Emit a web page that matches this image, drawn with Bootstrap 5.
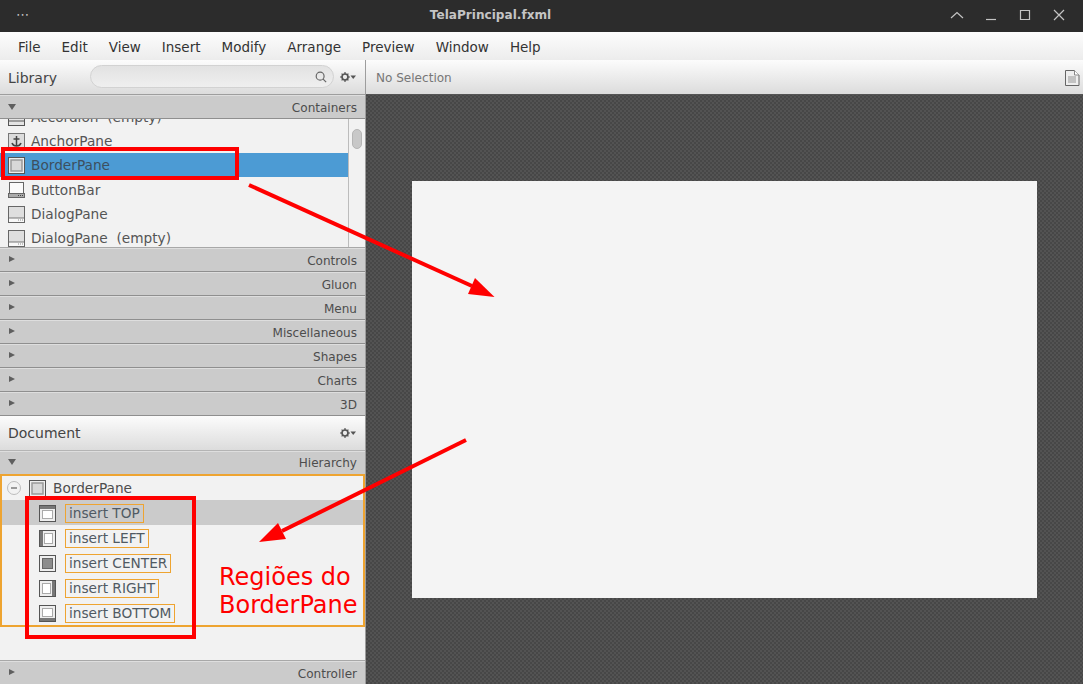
<!DOCTYPE html>
<html lang="en">
<head>
<meta charset="UTF-8">
<title>TelaPrincipal.fxml</title>
<link href="https://cdn.jsdelivr.net/npm/bootstrap@5.3.0/dist/css/bootstrap.min.css" rel="stylesheet">
<style>
html, body { height: 100%; overflow: hidden; }
body { font-family: "DejaVu Sans", sans-serif; font-size: 13.7px; color: #4d4d4d; background: #f2f2f2; position: relative; }
.title-bar { height: 32px; background: #2c2c2c; color: #c4c4c4; position: relative; padding-right: 102px; padding-bottom: 2px; }
.title-text { font-weight: 700; font-size: 12.1px; }
.dots { left: 16px; top: 7px; font-size: 13px; letter-spacing: 1px; line-height: 16px; }
.win-btns { right: 0; top: 0; height: 32px; }
.win-btns svg { display: block; position: absolute; top: 8px; }
.win-up { right: 118px; }
.win-min { right: 83px; }
.win-max { right: 50px; }
.win-close { right: 15px; }
.menu-bar { height: 28px; background: linear-gradient(#fdfdfd, #ececec); padding-left: 18px; padding-top: 2px; gap: 21px; color: #333; font-size: 13.5px; }
.main-area { height: 624px; }
.left-pane { width: 366px; border-right: 1px solid #9d9d9d; background: #f2f2f2; }
.pane-head { background: linear-gradient(#fcfcfc, #dcdcdc); border-bottom: 1px solid #9e9e9e; padding: 0 8px; font-size: 14px; color: #444; }
.lib-head { height: 35px; padding-top: 2px; }
.lib-head > svg { margin-top: -2px; }
.doc-head { height: 35px; border-bottom-color: #b4b4b4; }
.search-box { width: 244px; height: 23px; margin-left: 33px; margin-top: -3px; padding-right: 6px; border: 1px solid #d2d2d2; border-radius: 12px; background: linear-gradient(#e2e2e2, #efefef); }
.acc-bar { height: 24px; background: #cbcbcb; border-bottom: 1px solid #8f8f8f; border-top: 1px solid #dedede; padding: 2px 8px 0; font-size: 12.05px; color: #4d4d4d; }
.acc-bar.hier-bar { padding-top: 0; }
.tri-r { width: 0; height: 0; border-left: 6px solid #5f5f5f; border-top: 3.5px solid transparent; border-bottom: 3.5px solid transparent; margin-top: -4px; margin-left: 1px; }
.tri-d { width: 0; height: 0; border-top: 6px solid #5f5f5f; border-left: 4px solid transparent; border-right: 4px solid transparent; margin-top: -3px; }
.lib-list { height: 129px; overflow: hidden; background: #f2f2f2; border-bottom: 1px solid #a8a8a8; }
.lib-inner { margin-top: -15px; margin-right: 16px; }
.lib-scroll { right: 0; top: 0; bottom: 0; width: 17px; border-left: 1px solid #bcbcbc; background: #f2f2f2; }
.lib-thumb { position: absolute; left: 3px; top: 10px; width: 10px; height: 20px; background: #c8c8c8; border: 1px solid #b5b5b5; border-radius: 5px; }
.lib-row { height: 24.3px; padding-left: 8px; padding-top: 2px; gap: 6px; white-space: pre; color: #555; }
.lib-row.selected { background: #4c9bd4; color: #3d4f5e; }
.tree-box { height: 153px; margin-top: -1px; border: 2px solid #eea431; background: #f2f2f2; position: relative; }
.tree-top { height: 24px; padding-left: 5px; }
.tree-label { margin-left: 7px; }
.tree-row { height: 25px; padding-left: 37px; padding-top: 2px; }
.tree-row.active { background: #cbcbcb; }
.minus-circle { width: 14px; height: 14px; border-radius: 50%; border: 1px solid #bdbdbd; margin-right: 8px; position: relative; }
.minus-circle::after { content: ""; position: absolute; left: 3px; top: 5px; width: 6px; height: 2px; background: #9a9a9a; }
.slot-tag { border: 1px solid #eea431; margin-left: 9px; height: 19px; line-height: 17px; padding: 0 3px; color: #505a63; }
.tree-gap { height: 34px; border-bottom: 1px solid #a8a8a8; }
.canvas-pane { background-color: #4b4b4b; background-image: repeating-conic-gradient(#474747 0 25%, #535353 0 50%); background-size: 4px 4px; }
.canvas-head { height: 35px; background: linear-gradient(#fcfcfc, #dcdcdc); border-bottom: 1px solid #555; padding: 3px 3px 0 10px; color: #777; font-size: 12.05px; }
.canvas-head svg { margin-top: -2px; }
.art-board { width: 625px; height: 417px; background: #f4f4f4; }
.note-svg { left: 0; top: 0; pointer-events: none; }
.note-text { left: 219px; top: 563px; color: #f00; font-size: 24px; line-height: 28px; }
</style>
</head>
<body>

<svg width="0" height="0" class="position-absolute">
  <symbol id="gear-menu" viewBox="0 0 18 12"><circle cx="6" cy="6" r="3" fill="none" stroke="#555" stroke-width="1.7"/><path d="M6 1V3M6 9V11M1 6H3M9 6H11M2.600 2.600L4 4M8 8L9.400 9.400M9.400 2.600L8 4M4 8L2.600 9.400" stroke="#555" stroke-width="1.2"/><path d="M11.500 4.500H17L14.200 8Z" fill="#555"/></symbol>
  <symbol id="dialog-icon" viewBox="0 0 17 17"><rect x="0.500" y="0.500" width="16" height="16" fill="#dedede" stroke="#666"/><rect x="1" y="12" width="15" height="4" fill="#f8f8f8"/><path d="M1 12H16" stroke="#777"/><path d="M10 14H11M12 14H13M14 14H15" stroke="#888"/></symbol>
  <symbol id="border-icon" viewBox="0 0 17 17"><rect x="0.500" y="0.500" width="16" height="16" fill="#eee" stroke="#555"/><rect x="3" y="3" width="11" height="11" fill="#d8d8d8" stroke="#999" stroke-width="1.500"/></symbol>
</svg>

<div class="title-bar d-flex align-items-center justify-content-center">
  <span class="title-text">TelaPrincipal.fxml</span>
  <span class="dots position-absolute">&#8943;</span>
  <div class="win-btns position-absolute">
    <svg class="win-up" width="16" height="16" fill="none" stroke="#c4c4c4" stroke-width="1.2"><path d="M2 10L8 4.500L14 10"/></svg>
    <svg class="win-min" width="16" height="16" fill="none" stroke="#c4c4c4" stroke-width="1.2"><path d="M2 11.500H12"/></svg>
    <svg class="win-max" width="16" height="16" fill="none" stroke="#c4c4c4" stroke-width="1.2"><path d="M3.500 2.500H12.500V11.500H3.500Z"/></svg>
    <svg class="win-close" width="16" height="16" fill="none" stroke="#c4c4c4" stroke-width="1.2"><path d="M2 2L12 12M12 2L2 12"/></svg>
  </div>
</div>

<div class="menu-bar d-flex align-items-center">
  <span>File</span><span>Edit</span><span>View</span><span>Insert</span><span>Modify</span><span>Arrange</span><span>Preview</span><span>Window</span><span>Help</span>
</div>

<div class="main-area d-flex">
  <div class="left-pane flex-shrink-0">
    <div class="pane-head lib-head d-flex align-items-center">
      <span>Library</span>
      <div class="search-box d-flex align-items-center justify-content-end">
        <svg width="12" height="12" viewBox="0 0 14 14" fill="none" stroke="#666" stroke-width="1.4"><circle cx="6" cy="6" r="4.600"/><path d="M9.500 9.500L13 13"/></svg>
      </div>
      <svg class="ms-auto" width="18" height="12"><use href="#gear-menu"/></svg>
    </div>
    <div class="acc-bar d-flex align-items-center justify-content-between"><span class="tri-d"></span><span>Containers</span></div>
    <div class="lib-list position-relative">
      <div class="lib-inner">
        <div class="lib-row d-flex align-items-center"><svg width="17" height="17" stroke="#555"><rect x="0.500" y="0.500" width="16" height="16" fill="#e4e4e4"/><path d="M1 12H16"/></svg><span>Accordion  (empty)</span></div>
        <div class="lib-row d-flex align-items-center"><svg width="17" height="17" stroke="#444"><rect x="0.500" y="0.500" width="16" height="16" fill="#dcdcdc" stroke="#777"/><path d="M8.500 3V13M5.500 6H11.500M4 10Q5 13 8.500 13Q12 13 13 10" fill="none" stroke-width="1.500"/></svg><span>AnchorPane</span></div>
        <div class="lib-row selected d-flex align-items-center"><svg width="17" height="17"><use href="#border-icon"/></svg><span>BorderPane</span></div>
        <div class="lib-row d-flex align-items-center"><svg width="17" height="17"><rect x="1.500" y="0.500" width="14" height="12" fill="#fafafa" stroke="#666"/><rect x="0.500" y="11.500" width="16" height="4" fill="#aaa" stroke="#666"/><path d="M10 13.500H11M12 13.500H13M14 13.500H15" stroke="#444"/></svg><span>ButtonBar</span></div>
        <div class="lib-row d-flex align-items-center"><svg width="17" height="17"><use href="#dialog-icon"/></svg><span>DialogPane</span></div>
        <div class="lib-row d-flex align-items-center"><svg width="17" height="17"><use href="#dialog-icon"/></svg><span>DialogPane  (empty)</span></div>
      </div>
      <div class="lib-scroll position-absolute"><div class="lib-thumb"></div></div>
    </div>
    <div class="acc-bar d-flex align-items-center justify-content-between"><span class="tri-r"></span><span>Controls</span></div>
    <div class="acc-bar d-flex align-items-center justify-content-between"><span class="tri-r"></span><span>Gluon</span></div>
    <div class="acc-bar d-flex align-items-center justify-content-between"><span class="tri-r"></span><span>Menu</span></div>
    <div class="acc-bar d-flex align-items-center justify-content-between"><span class="tri-r"></span><span>Miscellaneous</span></div>
    <div class="acc-bar d-flex align-items-center justify-content-between"><span class="tri-r"></span><span>Shapes</span></div>
    <div class="acc-bar d-flex align-items-center justify-content-between"><span class="tri-r"></span><span>Charts</span></div>
    <div class="acc-bar d-flex align-items-center justify-content-between"><span class="tri-r"></span><span>3D</span></div>
    <div class="pane-head doc-head d-flex align-items-center justify-content-between">
      <span>Document</span>
      <svg width="18" height="12"><use href="#gear-menu"/></svg>
    </div>
    <div class="acc-bar hier-bar d-flex align-items-center justify-content-between"><span class="tri-d"></span><span>Hierarchy</span></div>
    <div class="tree-box">
      <div class="tree-top d-flex align-items-center">
        <span class="minus-circle"></span>
        <svg width="17" height="17"><use href="#border-icon"/></svg>
        <span class="tree-label">BorderPane</span>
      </div>
      <div class="tree-row active d-flex align-items-center"><svg width="17" height="17"><rect x="0.500" y="0.500" width="16" height="16" fill="#eee" stroke="#555"/><rect x="1" y="1" width="15" height="3" fill="#777"/><rect x="3.500" y="5.500" width="10" height="8" fill="#fff" stroke="#aaa"/></svg><span class="slot-tag">insert TOP</span></div>
      <div class="tree-row d-flex align-items-center"><svg width="17" height="17"><rect x="0.500" y="0.500" width="16" height="16" fill="#eee" stroke="#555"/><rect x="1" y="1" width="3" height="15" fill="#777"/><rect x="5.500" y="3.500" width="8" height="10" fill="#fff" stroke="#aaa"/></svg><span class="slot-tag">insert LEFT</span></div>
      <div class="tree-row d-flex align-items-center"><svg width="17" height="17"><rect x="0.500" y="0.500" width="16" height="16" fill="#eee" stroke="#555"/><rect x="3.500" y="3.500" width="10" height="10" fill="#8c8c8c" stroke="#666"/></svg><span class="slot-tag">insert CENTER</span></div>
      <div class="tree-row d-flex align-items-center"><svg width="17" height="17"><rect x="0.500" y="0.500" width="16" height="16" fill="#eee" stroke="#555"/><rect x="13" y="1" width="3" height="15" fill="#777"/><rect x="3.500" y="3.500" width="8" height="10" fill="#fff" stroke="#aaa"/></svg><span class="slot-tag">insert RIGHT</span></div>
      <div class="tree-row d-flex align-items-center"><svg width="17" height="17"><rect x="0.500" y="0.500" width="16" height="16" fill="#eee" stroke="#555"/><rect x="1" y="13" width="15" height="3" fill="#777"/><rect x="3.500" y="3.500" width="10" height="8" fill="#fff" stroke="#aaa"/></svg><span class="slot-tag">insert BOTTOM</span></div>
    </div>
    <div class="tree-gap"></div>
    <div class="acc-bar d-flex align-items-center justify-content-between"><span class="tri-r"></span><span>Controller</span></div>
  </div>

  <div class="canvas-pane flex-grow-1 d-flex flex-column">
    <div class="canvas-head d-flex align-items-center justify-content-between">
      <span>No Selection</span>
      <svg width="16" height="18"><path d="M1.500 1.500H10.500L15 6V16.500H1.500Z" fill="#eee" stroke="#666"/><path d="M10.500 1.500V6H15" fill="#fff" stroke="#888"/><rect x="4" y="7" width="8" height="7" fill="#c2c2c2"/></svg>
    </div>
    <div class="flex-grow-1 d-flex align-items-center justify-content-center">
      <div class="art-board"></div>
    </div>
  </div>
</div>

<svg class="note-svg position-absolute" width="1083" height="684" fill="none">
  <rect x="3" y="149" width="234" height="29" stroke="#f00" stroke-width="4"/>
  <rect x="27" y="498" width="167" height="139" stroke="#f00" stroke-width="4"/>
  <path d="M249 185L472 286" stroke="#f00" stroke-width="4"/>
  <path d="M494.500 297L468 294L475 278Z" fill="#f00"/>
  <path d="M466 440L282 531" stroke="#f00" stroke-width="4"/>
  <path d="M259 542L278 523L286 539Z" fill="#f00"/>
</svg>
<div class="note-text position-absolute">Regiões do<br>BorderPane</div>

<script src="https://cdn.jsdelivr.net/npm/bootstrap@5.3.0/dist/js/bootstrap.bundle.min.js"></script>
</body>
</html>
